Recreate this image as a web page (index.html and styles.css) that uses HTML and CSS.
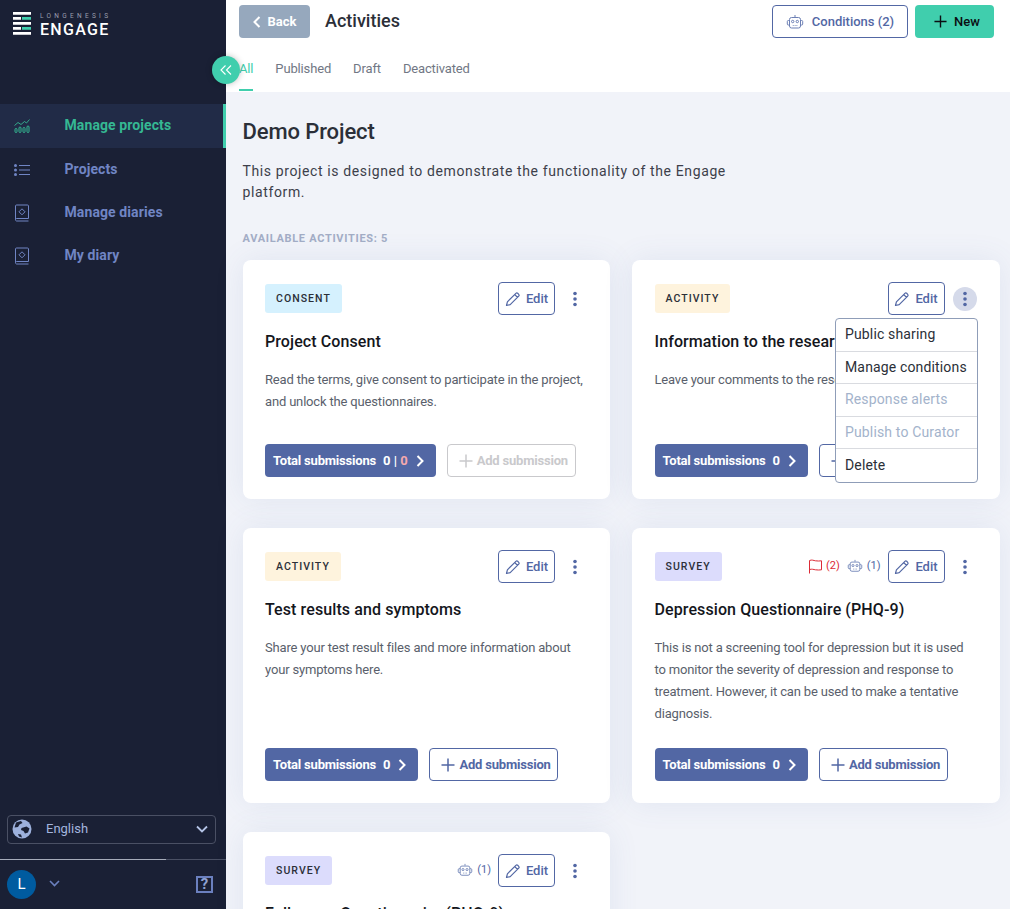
FILE: index.html
```html
<!DOCTYPE html>
<html>
<head>
    <title>Engage - Activities</title>
    <link rel="stylesheet" href="styles.css">
</head>
<body>
<svg class="icon-defs" width="0" height="0">
    <symbol id="i-robot" viewBox="0 0 18 16">
        <path d="M9 1v2M5.5 3.500h7a2 2 0 0 1 2 2v6.500a2 2 0 0 1-2 2h-7a2 2 0 0 1-2-2V5.500a2 2 0 0 1 2-2zM3.500 6.500H2.300a1 1 0 0 0-1 1v2.500a1 1 0 0 0 1 1h1.200M14.500 6.500h1.200a1 1 0 0 1 1 1v2.500a1 1 0 0 1-1 1h-1.200M6.800 11.500h.8M8.700 11.500h.8M10.500 11.500h.8" fill="none" stroke="currentColor" stroke-width="1"/>
        <circle cx="6.700" cy="7.500" r="1.200" fill="none" stroke="currentColor"/>
        <circle cx="11.300" cy="7.500" r="1.200" fill="none" stroke="currentColor"/>
    </symbol>
    <symbol id="i-pen" viewBox="0 0 16 16">
        <path d="M1.500 14.500l.9-3.700L10.900 2.300a1.300 1.300 0 0 1 1.800 0l1 1a1.300 1.300 0 0 1 0 1.800L5.200 13.600zM9.700 3.500l2.800 2.800" fill="none" stroke="currentColor" stroke-width="1.200" stroke-linejoin="round"/>
    </symbol>
    <symbol id="i-plus" viewBox="0 0 14 14">
        <path d="M7 .5v13M.5 7h13" fill="none" stroke="currentColor" stroke-width="1.500"/>
    </symbol>
    <symbol id="i-next" viewBox="0 0 8 12">
        <path d="M1.500 1l5 5-5 5" fill="none" stroke="currentColor" stroke-width="2"/>
    </symbol>
    <symbol id="i-kebab" viewBox="0 0 4 16">
        <circle cx="2" cy="2.500" r="1.800" fill="currentColor"/>
        <circle cx="2" cy="8" r="1.800" fill="currentColor"/>
        <circle cx="2" cy="13.500" r="1.800" fill="currentColor"/>
    </symbol>
    <symbol id="i-book" viewBox="0 0 16 18">
        <path d="M1.500 15.500V2a1 1 0 0 1 1-1h11a1 1 0 0 1 1 1v12.500h-12a1.300 1.300 0 0 0-1 1.200 1.300 1.300 0 0 0 1 1.300h12" fill="none" stroke="currentColor"/>
        <path d="M8 4.800l3 3-3 3-3-3z" fill="none" stroke="currentColor"/>
    </symbol>
</svg>

<aside class="sidebar">
    <div class="logo">
        <svg class="logo-mark" width="18" height="23" viewBox="0 0 18 23">
            <path d="M0 0h18v2.800H0zM0 5h8v2.800H0zM0 10h18v2.800H0zM0 15h8v2.800H0zM0 20h18v2.800H0z" fill="#fff"/>
            <path d="M9 5h9v2.800H9zM9 15h9v2.800H9z" fill="#40cead"/>
        </svg>
        <div class="logo-text">
            <span class="logo-small">LONGENESIS</span>
            <span class="logo-big">ENGAGE</span>
        </div>
    </div>
    <nav class="nav">
        <a class="nav-item active">
            <svg width="16" height="14" viewBox="0 0 16 14" fill="none" stroke="currentColor">
                <path d="M.5 6.500L4 3.500l3 2 3.500-3 2 1.500L15.500.5" stroke-width=".9"/>
                <rect x="1" y="9.500" width="2" height="4" rx="1"/>
                <rect x="5" y="8" width="2" height="5.500" rx="1"/>
                <rect x="9" y="8.500" width="2" height="5" rx="1"/>
                <rect x="13" y="7" width="2" height="6.500" rx="1"/>
            </svg>
            Manage projects
        </a>
        <a class="nav-item">
            <svg width="16" height="12" viewBox="0 0 16 12">
                <path d="M5 1.500h11M5 6h11M5 10.500h11" stroke="currentColor"/>
                <circle cx="1.500" cy="1.500" r="1.500" fill="currentColor"/>
                <circle cx="1.500" cy="6" r="1.500" fill="currentColor"/>
                <circle cx="1.500" cy="10.500" r="1.500" fill="currentColor"/>
            </svg>
            Projects
        </a>
        <a class="nav-item"><svg width="16" height="18"><use href="#i-book"/></svg>Manage diaries</a>
        <a class="nav-item"><svg width="16" height="18"><use href="#i-book"/></svg>My diary</a>
    </nav>
    <div class="sidebar-bottom">
        <div class="lang">
            <svg class="globe" width="20" height="20" viewBox="0 0 20 20">
                <circle cx="10" cy="10" r="9.500" fill="#9db1dd"/>
                <path d="M4 3.500l5-1.500 1.500 2-3 1.500L6 8l-3.500.5zM9.500 9l5-1.500 3 2-1.500 4-3 1-1.500-2.500-2.500-1zM6 15l3 .5 1 3-3-1z" fill="#1a2035"/>
            </svg>
            <span class="lang-name">English</span>
            <svg class="lang-arrow" width="12" height="8" viewBox="0 0 12 8"><path d="M1 1.500l5 5 5-5" fill="none" stroke="currentColor" stroke-width="1.800"/></svg>
        </div>
        <div class="progress"><div class="progress-fill"></div></div>
        <div class="user">
            <span class="avatar">L</span>
            <svg class="user-arrow" width="11" height="7" viewBox="0 0 11 7"><path d="M1 1l4.500 4.500L10 1" fill="none" stroke="currentColor" stroke-width="1.600"/></svg>
            <span class="help">?</span>
        </div>
    </div>
</aside>

<button class="collapse">
    <svg width="12" height="10" viewBox="0 0 12 10"><path d="M5.500.5L1 5l4.500 4.500M11 .5L6.500 5l4.500 4.500" fill="none" stroke="#fff" stroke-width="1.100"/></svg>
</button>

<main class="main">
    <header class="header">
        <div class="header-top">
            <button class="btn back">
                <svg width="8" height="12"><use href="#i-next" class="flip"/></svg>
                Back
            </button>
            <h2 class="page-title">Activities</h2>
            <button class="btn outline conditions"><svg class="robot" width="18" height="16"><use href="#i-robot"/></svg>Conditions (2)</button>
            <button class="btn new"><svg width="13" height="13"><use href="#i-plus"/></svg>New</button>
        </div>
        <div class="tabs">
            <a class="tab active">All</a>
            <a class="tab">Published</a>
            <a class="tab">Draft</a>
            <a class="tab">Deactivated</a>
        </div>
    </header>

    <section class="content">
        <h1 class="project-title">Demo Project</h1>
        <p class="project-desc">This project is designed to demonstrate the functionality of the Engage platform.</p>
        <div class="available">AVAILABLE ACTIVITIES: 5</div>

        <div class="cards">
            <article class="card">
                <div class="card-head">
                    <span class="badge consent">CONSENT</span>
                    <div class="card-actions">
                        <button class="btn outline edit"><svg width="16" height="16"><use href="#i-pen"/></svg>Edit</button>
                        <span class="kebab"><svg width="4" height="16"><use href="#i-kebab"/></svg></span>
                    </div>
                </div>
                <h3 class="card-title">Project Consent</h3>
                <p class="card-desc">Read the terms, give consent to participate in the project, and unlock the questionnaires.</p>
                <div class="card-foot">
                    <button class="btn total">Total submissions <span class="count">0 | <span class="count-red">0</span></span><svg width="8" height="12"><use href="#i-next"/></svg></button>
                    <button class="btn outline add disabled"><svg width="14" height="14"><use href="#i-plus"/></svg>Add submission</button>
                </div>
            </article>

            <article class="card">
                <div class="card-head">
                    <span class="badge activity">ACTIVITY</span>
                    <div class="card-actions">
                        <button class="btn outline edit"><svg width="16" height="16"><use href="#i-pen"/></svg>Edit</button>
                        <span class="kebab open"><svg width="4" height="16"><use href="#i-kebab"/></svg></span>
                    </div>
                </div>
                <h3 class="card-title">Information to the researchers</h3>
                <p class="card-desc">Leave your comments to the research team here.</p>
                <div class="card-foot">
                    <button class="btn total">Total submissions <span class="count">0</span><svg width="8" height="12"><use href="#i-next"/></svg></button>
                    <button class="btn outline add"><svg width="14" height="14"><use href="#i-plus"/></svg>Add submission</button>
                </div>
                <ul class="menu">
                    <li>Public sharing</li>
                    <li>Manage conditions</li>
                    <li class="off">Response alerts</li>
                    <li class="off">Publish to Curator</li>
                    <li>Delete</li>
                </ul>
            </article>

            <article class="card">
                <div class="card-head">
                    <span class="badge activity">ACTIVITY</span>
                    <div class="card-actions">
                        <button class="btn outline edit"><svg width="16" height="16"><use href="#i-pen"/></svg>Edit</button>
                        <span class="kebab"><svg width="4" height="16"><use href="#i-kebab"/></svg></span>
                    </div>
                </div>
                <h3 class="card-title">Test results and symptoms</h3>
                <p class="card-desc">Share your test result files and more information about your symptoms here.</p>
                <div class="card-foot">
                    <button class="btn total">Total submissions <span class="count">0</span><svg width="8" height="12"><use href="#i-next"/></svg></button>
                    <button class="btn outline add"><svg width="14" height="14"><use href="#i-plus"/></svg>Add submission</button>
                </div>
            </article>

            <article class="card">
                <div class="card-head">
                    <span class="badge survey">SURVEY</span>
                    <div class="card-actions">
                        <span class="meta red">
                            <svg width="15" height="16" viewBox="0 0 15 16"><path d="M1.500 15.500V2.500c2.500-1 4 0 6 .3 2 .3 4 .3 6 0v9c-2 .3-4 .3-6 0-2-.3-3.500-1-6-.3" fill="none" stroke="currentColor"/></svg>
                            (2)
                        </span>
                        <span class="meta blue"><svg class="robot" width="16" height="14"><use href="#i-robot"/></svg>(1)</span>
                        <button class="btn outline edit"><svg width="16" height="16"><use href="#i-pen"/></svg>Edit</button>
                        <span class="kebab"><svg width="4" height="16"><use href="#i-kebab"/></svg></span>
                    </div>
                </div>
                <h3 class="card-title">Depression Questionnaire (PHQ-9)</h3>
                <p class="card-desc">This is not a screening tool for depression but it is used to monitor the severity of depression and response to treatment. However, it can be used to make a tentative diagnosis.</p>
                <div class="card-foot">
                    <button class="btn total">Total submissions <span class="count">0</span><svg width="8" height="12"><use href="#i-next"/></svg></button>
                    <button class="btn outline add"><svg width="14" height="14"><use href="#i-plus"/></svg>Add submission</button>
                </div>
            </article>

            <article class="card">
                <div class="card-head">
                    <span class="badge survey">SURVEY</span>
                    <div class="card-actions">
                        <span class="meta blue"><svg class="robot" width="16" height="14"><use href="#i-robot"/></svg>(1)</span>
                        <button class="btn outline edit"><svg width="16" height="16"><use href="#i-pen"/></svg>Edit</button>
                        <span class="kebab"><svg width="4" height="16"><use href="#i-kebab"/></svg></span>
                    </div>
                </div>
                <h3 class="card-title">Follow-up Questionnaire (PHQ-9)</h3>
            </article>
        </div>
    </section>
</main>
</body>
</html>
```

FILE: styles.css
```css
* {
  box-sizing: border-box;
}

html, body {
  height: 909px;
  overflow: hidden;
}

body {
  margin: 0;
  display: flex;
  position: relative;
  font-family: Roboto, "Liberation Sans", sans-serif;
  background: #f1f3f9;
  color: #2b2f38;
}

.icon-defs {
  position: absolute;
}

/* sidebar */

.sidebar {
  width: 226px;
  flex: none;
  height: 909px;
  display: flex;
  flex-direction: column;
  background: #1a2035;
}

.logo {
  height: 104px;
  padding: 12px 0 0 13px;
  display: flex;
  gap: 9px;
}

.logo-text {
  display: flex;
  flex-direction: column;
}

.logo-small {
  font-size: 6.500px;
  line-height: 9px;
  letter-spacing: 3.300px;
  color: #9a9fae;
  white-space: nowrap;
}

.logo-big {
  font-size: 16px;
  line-height: 18px;
  font-weight: 500;
  letter-spacing: 1.300px;
  color: #fff;
}

.nav-item {
  height: 43px;
  padding: 0 0 2px 14px;
  display: flex;
  align-items: center;
  font-size: 14px;
  font-weight: 700;
  letter-spacing: .1px;
  color: #7085c4;
}

.nav-item svg {
  width: 16px;
  margin: 2px 34.500px 0 0;
  flex: none;
}

.nav-item.active {
  height: 44px;
  color: #35b893;
  background: #212b47;
  border-right: 3px solid #40cead;
}

.sidebar-bottom {
  margin-top: auto;
}

.lang {
  margin: 0 10px 0 7px;
  height: 29px;
  padding: 0 7px 2px 4px;
  display: flex;
  align-items: center;
  border: 1px solid #4a5064;
  border-radius: 4px;
  color: #a3b5de;
  font-size: 13px;
}

.lang-name {
  margin-left: 14px;
  flex: 1;
}

.lang-arrow {
  color: #b4c3e6;
}

.progress {
  margin-top: 15px;
  height: 1px;
  background: #4a5064;
}

.progress-fill {
  width: 166px;
  height: 1px;
  background: #a6acba;
}

.user {
  height: 49px;
  padding: 0 13px 0 7px;
  display: flex;
  align-items: center;
}

.avatar {
  width: 29px;
  height: 29px;
  border-radius: 50%;
  background: #005b9f;
  color: #fff;
  font-size: 15px;
  line-height: 29px;
  text-align: center;
}

.user-arrow {
  margin: 0 0 3px 13px;
  color: #6b80bf;
}

.help {
  margin-left: auto;
  width: 17px;
  height: 17px;
  border: 2px solid #6b80bf;
  color: #8ea0d2;
  font-size: 15px;
  font-weight: 700;
  line-height: 13px;
  text-align: center;
}

.collapse {
  position: absolute;
  left: 212px;
  top: 56px;
  z-index: 3;
  width: 28px;
  height: 28px;
  padding: 0;
  display: flex;
  align-items: center;
  justify-content: center;
  border: 0;
  border-radius: 50%;
  background: #40cead;
  box-shadow: 0 0 6px rgba(0, 0, 0, .25);
}

/* header */

.main {
  flex: 1;
  min-width: 0;
}

.header {
  height: 92px;
  padding: 5px 16px 0 13px;
  background: #fff;
}

.header-top {
  display: flex;
  align-items: center;
  height: 33px;
}

.btn {
  height: 33px;
  padding: 0;
  display: inline-flex;
  align-items: center;
  justify-content: center;
  border: 0;
  border-radius: 4px;
  font-family: inherit;
  font-size: 13px;
  font-weight: 700;
  white-space: nowrap;
}

.btn.outline {
  background: #fff;
  border: 1px solid #5267a4;
  color: #5267a4;
}

.back {
  width: 71px;
  gap: 7px;
  background: #96a8bd;
  color: #fff;
}

.flip {
  transform: translate(8px, 0) scaleX(-1);
}

.page-title {
  margin: 0 auto 2px 15px;
  font-size: 18px;
  font-weight: 500;
}

.conditions {
  width: 136px;
  gap: 8px;
  font-weight: 500;
}

.robot {
  color: #6d80b5;
}

.new {
  width: 79px;
  margin-left: 7px;
  padding-left: 19px;
  justify-content: flex-start;
  gap: 7px;
  background: #40cead;
  color: #0b0e13;
  font-weight: 500;
}

.tabs {
  margin-top: 12px;
  display: flex;
  gap: 22px;
}

.tab {
  padding: 9px 0 10px;
  border-bottom: 2px solid transparent;
  font-size: 13px;
  line-height: 20px;
  letter-spacing: -.15px;
  color: #717784;
}

.tab.active {
  color: #40cead;
  border-bottom-color: #40cead;
}

/* content */

.content {
  padding: 26px 10.500px 0 16.500px;
}

.project-title {
  margin: 0;
  font-size: 22px;
  line-height: 28px;
  font-weight: 500;
  letter-spacing: -.1px;
}

.project-desc {
  width: 500px;
  margin: 15px 0 0;
  font-size: 14px;
  line-height: 21px;
  letter-spacing: .62px;
  color: #3d3f4b;
}

.available {
  margin-top: 29px;
  font-size: 11px;
  line-height: 14px;
  font-weight: 700;
  letter-spacing: .7px;
  color: #a3adc6;
}

.cards {
  margin-top: 14px;
  display: grid;
  grid-template-columns: 1fr 1fr;
  gap: 29px 22px;
}

.card {
  position: relative;
  min-width: 0;
  padding: 22px 23px 22px 22.500px;
  display: flex;
  flex-direction: column;
  background: #fff;
  border-radius: 8px;
  box-shadow: 0 0 30px rgba(82, 103, 164, .1);
}

.card-head {
  height: 33px;
  display: flex;
  align-items: center;
  justify-content: space-between;
}

.badge {
  height: 29px;
  padding: 0 11px;
  display: flex;
  align-items: center;
  border-radius: 3px;
  font-size: 10.500px;
  font-weight: 500;
  letter-spacing: 1.050px;
  color: #2b2f38;
}

.badge.consent {
  background: #d5f1fe;
}

.badge.activity {
  background: #fef3dd;
}

.badge.survey {
  background: #dcdcfc;
}

.card-actions {
  display: flex;
  align-items: center;
}

.edit {
  width: 57px;
  gap: 5px;
  font-weight: 500;
}

.kebab {
  width: 24px;
  height: 24px;
  margin-left: 8px;
  display: flex;
  align-items: center;
  justify-content: center;
  border-radius: 50%;
  color: #5267a4;
}

.kebab.open {
  background: #d5daea;
}

.meta {
  display: flex;
  align-items: center;
  margin-right: 7px;
  margin-bottom: 2px;
  gap: 4px;
  font-size: 11px;
}

.meta.red {
  color: #dc2b36;
  gap: 3px;
}

.meta.blue {
  color: #5267a4;
}

.card-title {
  margin: 16px 0 0;
  font-size: 16px;
  line-height: 22px;
  font-weight: 500;
  letter-spacing: .1px;
  color: #14161c;
}

.card-desc {
  margin: 16px 0 23px;
  min-height: 52px;
  font-size: 13px;
  line-height: 22px;
  letter-spacing: -.17px;
  color: #5a5f6c;
}

.card-foot {
  margin-top: auto;
  display: flex;
  gap: 11px;
}

.total {
  padding: 0 12px 0 8px;
  background: #5267a4;
  color: #fff;
  font-weight: 700;
  letter-spacing: -.2px;
}

.count {
  margin: 0 8px 0 7px;
  letter-spacing: 0;
}

.count-red {
  color: #f5a9ad;
}

.add {
  width: 129px;
  padding-left: 11px;
  justify-content: flex-start;
  gap: 4px;
  letter-spacing: -.2px;
}

.add.disabled {
  border-color: #c9c9cc;
  color: #c9c9cc;
}

/* dropdown of the second card */

.menu {
  position: absolute;
  left: 203px;
  top: 58px;
  z-index: 2;
  width: 143px;
  margin: 0;
  padding: 0;
  list-style: none;
  background: #fff;
  border: 1px solid #8f9db8;
  border-radius: 4px;
  font-size: 14px;
  letter-spacing: .15px;
  color: #2b2f38;
}

.menu li {
  height: 32.500px;
  padding: 0 0 1px 9px;
  display: flex;
  align-items: center;
  border-bottom: 1px solid #d9dbe0;
  white-space: nowrap;
}

.menu li:last-child {
  border-bottom: 0;
}

.menu li.off {
  color: #a3b3cb;
}
```
